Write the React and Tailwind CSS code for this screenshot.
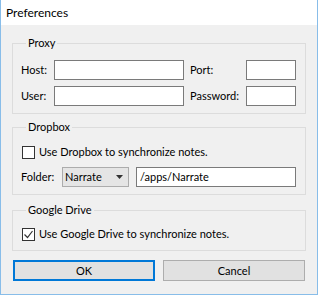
import React from "react";

const font = { fontFamily: 'Lato, "Liberation Sans", Arial, sans-serif' };

function Input({ className = "", value = "" }) {
  return (
    <div className={"h-[20px] border border-[#7a7a7a] bg-white flex items-center pl-[3px] " + className}>
      {value}
    </div>
  );
}

function Check({ checked }) {
  return (
    <div className="w-[13px] h-[13px] border border-[#333333] bg-white flex items-center justify-center shrink-0">
      {checked && (
        <svg width="11" height="11" viewBox="0 0 11 11">
          <path d="M1.5 5.5 L4.5 8.5 L9.5 2" fill="none" stroke="#333333" strokeWidth="1.2" />
        </svg>
      )}
    </div>
  );
}

export default function App() {
  return (
    <div
      className="w-[318px] h-[295px] border-x border-b border-[#88bde9] bg-[#f0f0f0] flex flex-col text-[11px] leading-[16px] text-black"
      style={font}
    >
      <div className="h-[25px] bg-white flex items-center pl-[5px] text-[12px] shrink-0">Preferences</div>

      <div className="flex flex-col px-[11px]">
        <fieldset className="mt-[10px] border border-[#dcdcdc] pl-[8px] pr-[9px] pb-[7px] pt-[9px]">
          <legend className="ml-[5px] px-[2px] leading-[16px]">Proxy</legend>
          <div className="flex flex-col gap-[6px]">
            <div className="flex items-center">
              <span className="w-[33px]">Host:</span>
              <Input className="w-[130px]" />
              <span className="ml-[6px] w-[56px]">Port:</span>
              <Input className="w-[50px]" />
            </div>
            <div className="flex items-center">
              <span className="w-[33px]">User:</span>
              <Input className="w-[130px]" />
              <span className="ml-[6px] w-[56px]">Password:</span>
              <Input className="w-[50px]" />
            </div>
          </div>
        </fieldset>

        <fieldset className="mt-[5px] border border-[#dcdcdc] pl-[8px] pr-[9px] pb-[7px] pt-[9px]">
          <legend className="ml-[5px] px-[2px] leading-[16px]">Dropbox</legend>
          <div className="flex items-center h-[16px] pl-[1px]">
            <Check />
            <span className="ml-[4px]">Use Dropbox to synchronize notes.</span>
          </div>
          <div className="flex items-center mt-[7px]">
            <span className="w-[41px]">Folder:</span>
            <div className="w-[67px] h-[20px] border border-[#acacac] bg-[#e5e5e5] flex items-center pl-[2px] pr-[5px] justify-between">
              <span>Narrate</span>
              <svg width="7" height="4" viewBox="0 0 7 4">
                <path d="M0 0 H7 L3.5 4 Z" fill="#333333" />
              </svg>
            </div>
            <Input className="ml-[7px] w-[160px]" value="/apps/Narrate" />
          </div>
        </fieldset>

        <fieldset className="mt-[7px] border border-[#dcdcdc] pl-[8px] pr-[9px] pb-[8px] pt-[8px]">
          <legend className="ml-[5px] px-[2px] leading-[16px]">Google Drive</legend>
          <div className="flex items-center h-[16px] pl-[1px]">
            <Check checked />
            <span className="ml-[4px]">Use Google Drive to synchronize notes.</span>
          </div>
        </fieldset>

        <div className="flex mt-[9px] gap-[8px] pl-[1px]">
          <div className="w-[142px] h-[21px] border-2 border-[#0078d7] bg-[#e1e1e1] flex items-center justify-center">OK</div>
          <div className="w-[142px] h-[21px] border border-[#adadad] bg-[#e1e1e1] flex items-center justify-center">Cancel</div>
        </div>
      </div>
    </div>
  );
}
